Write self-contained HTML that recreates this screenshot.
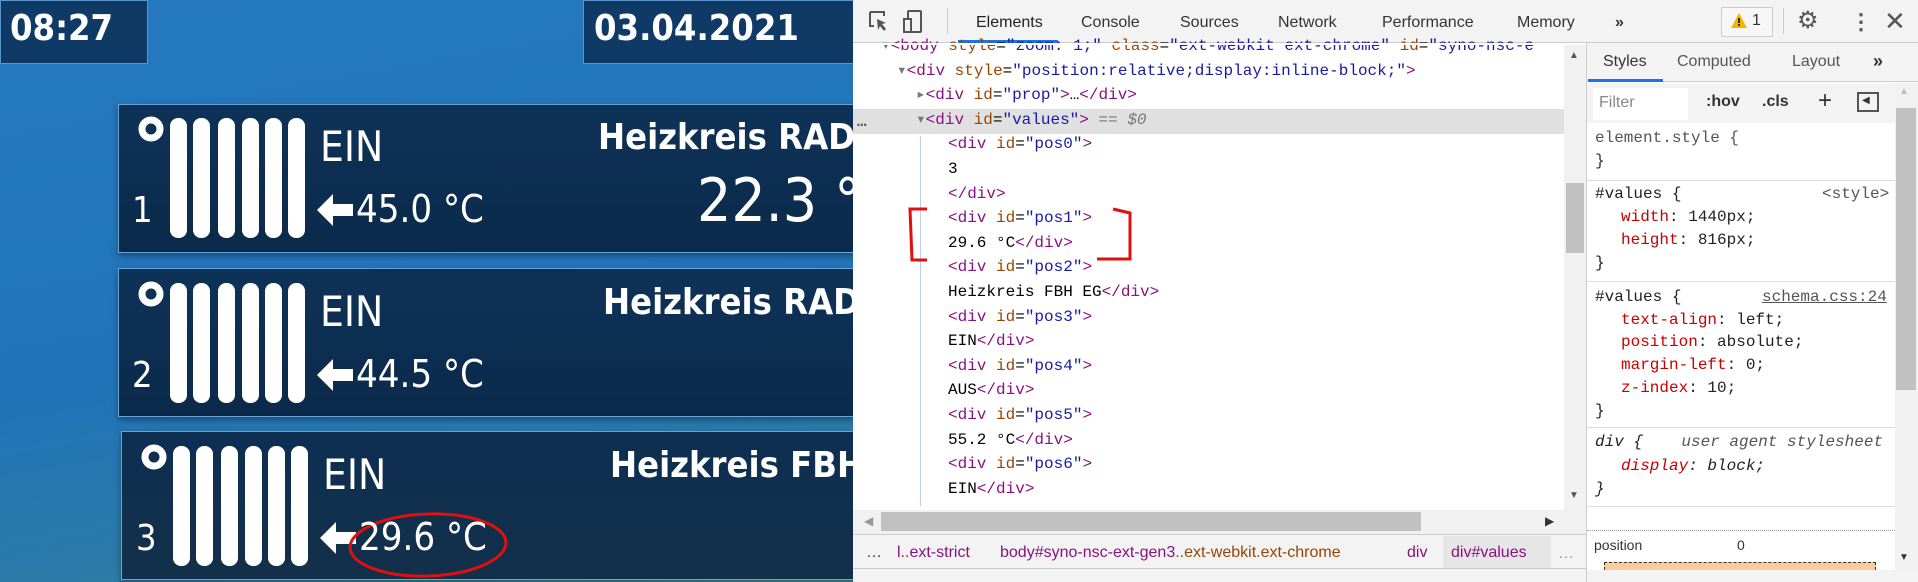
<!DOCTYPE html>
<html><head><meta charset="utf-8"><style>
*{margin:0;padding:0;box-sizing:border-box}
body{width:1918px;height:582px;overflow:hidden;position:relative;background:#fff;font-family:"Liberation Sans",sans-serif}
.a{position:absolute;white-space:nowrap}
.left{position:absolute;left:0;top:0;width:853px;height:582px;overflow:hidden;background:linear-gradient(170deg,#2579bf 0%,#2174b8 55%,#2a7aa8 80%,#3f9090 100%)}
.box{position:absolute;background:#103a66;border:1px solid #5a95cc}
.dv{font-family:"DejaVu Sans Condensed","DejaVu Sans",sans-serif;color:#fff}
.panel{position:absolute;left:118px;width:760px;height:149px;background:linear-gradient(180deg,#0e3257,#0b2a4b);border:1px solid #6aa3d6;box-shadow:0 3px 6px rgba(0,0,0,.35)}
.mono{font-family:"Liberation Mono",monospace;font-size:16px}
.tag{color:#881280}.at{color:#994500}.av{color:#1a1aa6}.g{color:#777}
.tab{position:absolute;top:14px;font-size:16px;color:#333}
</style></head><body>
<div class="left">
  <div class="box" style="left:0;top:0;width:148px;height:64px"></div>
  <div class="a dv" style="left:10px;top:8px;font-size:36px;font-weight:bold">08:27</div>
  <div class="box" style="left:583px;top:0;width:290px;height:64px"></div>
  <div class="a dv" style="left:594px;top:8px;font-size:36px;font-weight:bold">03.04.2021</div>

  <div class="panel" style="top:104px"></div>
  <div class="panel" style="top:268px"></div>
  <div class="panel" style="top:431px;left:121px;background:linear-gradient(180deg,#0e2f52,#13304a)"></div>

  <svg class="a" style="left:0;top:0" width="853" height="582">
    <defs>
      <g id="rad" fill="#fff">
        <circle cx="151" cy="129" r="9" fill="none" stroke="#fff" stroke-width="7"/>
        <rect x="170" y="118" width="17" height="120" rx="8"/>
        <rect x="193" y="118" width="17" height="120" rx="8"/>
        <rect x="218" y="118" width="17" height="120" rx="8"/>
        <rect x="242" y="118" width="17" height="120" rx="8"/>
        <rect x="265" y="118" width="17" height="120" rx="8"/>
        <rect x="288" y="118" width="17" height="120" rx="8"/>
        <path d="M317 210 L333 194 L333 204 L353 204 L353 216 L333 216 L333 226 Z"/>
      </g>
    </defs>
    <use href="#rad"/>
    <use href="#rad" y="165"/>
    <use href="#rad" x="3" y="328"/>
    <ellipse cx="428" cy="545" rx="78" ry="31" fill="none" stroke="#e01010" stroke-width="3" transform="rotate(-2 428 545)"/>
  </svg>

  <div class="a dv" style="left:132px;top:190px;font-size:36px">1</div>
  <div class="a dv" style="left:320px;top:122px;font-size:42px">EIN</div>
  <div class="a dv" style="left:356px;top:187px;font-size:38px">45.0 °C</div>
  <div class="a dv" style="left:598px;top:117px;font-size:36px;font-weight:bold">Heizkreis RAD</div>
  <div class="a dv" style="left:697px;top:166px;font-size:60px">22.3 °C</div>

  <div class="a dv" style="left:132px;top:355px;font-size:36px">2</div>
  <div class="a dv" style="left:320px;top:287px;font-size:42px">EIN</div>
  <div class="a dv" style="left:356px;top:352px;font-size:38px">44.5 °C</div>
  <div class="a dv" style="left:603px;top:282px;font-size:36px;font-weight:bold">Heizkreis RAD</div>

  <div class="a dv" style="left:136px;top:518px;font-size:36px">3</div>
  <div class="a dv" style="left:323px;top:450px;font-size:42px">EIN</div>
  <div class="a dv" style="left:359px;top:515px;font-size:38px">29.6 °C</div>
  <div class="a dv" style="left:610px;top:445px;font-size:36px;font-weight:bold">Heizkreis FBH</div>
</div>

<!-- devtools -->
<div class="a" style="left:853px;top:0;width:1065px;height:43px;background:#f3f3f3;border-bottom:1px solid #ccc"></div>
<svg class="a" style="left:868px;top:10px" width="60" height="24"><path d="M2 2h14v4M2 2v14h4" fill="none" stroke="#555" stroke-width="2"/><path d="M9 9l9 4-4 1 4 5-2 2-4-5-2 4z" fill="#555"/><rect x="40" y="1" width="13" height="21" rx="1" fill="none" stroke="#555" stroke-width="2"/><rect x="36" y="9" width="7" height="13" fill="#f3f3f3" stroke="#555" stroke-width="2"/></svg>
<div class="a" style="left:947px;top:8px;width:1px;height:26px;background:#ccc"></div>
<div class="tab" style="left:976px;color:#222">Elements</div>
<div class="a" style="left:958px;top:40px;width:100px;height:3px;background:#1a73e8"></div>
<div class="tab" style="left:1081px">Console</div>
<div class="tab" style="left:1180px">Sources</div>
<div class="tab" style="left:1278px">Network</div>
<div class="tab" style="left:1382px">Performance</div>
<div class="tab" style="left:1517px">Memory</div>
<div class="tab" style="left:1615px;font-weight:bold">»</div>
<div class="a" style="left:1721px;top:7px;width:52px;height:30px;border:1px solid #ccc;border-radius:2px;background:#f7f7f7"></div>
<svg class="a" style="left:1730px;top:12px" width="18" height="18"><path d="M9 1L17 16H1Z" fill="#f2b600"/><rect x="8" y="6" width="2" height="5" fill="#333"/><rect x="8" y="12" width="2" height="2" fill="#333"/></svg>
<div class="a" style="left:1752px;top:12px;font-size:16px;color:#333">1</div>
<div class="a" style="left:1783px;top:8px;width:1px;height:26px;background:#ccc"></div>
<div class="a" style="left:1797px;top:6px;font-size:24px;color:#555">⚙</div>
<div class="a" style="left:1850px;top:9px;font-size:22px;color:#555;font-weight:bold">⋮</div>
<div class="a" style="left:1884px;top:6px;font-size:26px;color:#555">✕</div>

<!-- elements pane -->
<div class="a" style="left:853px;top:109px;width:711px;height:25px;background:#e0e0e0"></div>
<div class="a" style="left:920px;top:136px;width:1px;height:370px;background:#b8d0e8"></div>
<div class="a mono" style="left:857px;top:113px;color:#555;font-weight:bold">…</div>
<div class="a mono" style="left:0;top:34px;line-height:24.6px">
<div style="padding-left:881px"><span class="g">▾</span><span class="tag">&lt;body</span> <span class="at">style</span>=<span class="av">"zoom: 1;"</span> <span class="at">class</span>=<span class="av">"ext-webkit ext-chrome"</span> <span class="at">id</span>=<span class="av">"syno-nsc-e</span></div>
<div style="padding-left:897px"><span class="g">▾</span><span class="tag">&lt;div</span> <span class="at">style</span>=<span class="av">"position:relative;display:inline-block;"</span><span class="tag">&gt;</span></div>
<div style="padding-left:916px"><span class="g">▸</span><span class="tag">&lt;div</span> <span class="at">id</span>=<span class="av">"prop"</span><span class="tag">&gt;</span>…<span class="tag">&lt;/div&gt;</span></div>
<div style="padding-left:916px"><span class="g">▾</span><span class="tag">&lt;div</span> <span class="at">id</span>=<span class="av">"values"</span><span class="tag">&gt;</span> <span class="g">== <i>$0</i></span></div>
<div style="padding-left:948px"><span class="tag">&lt;div</span> <span class="at">id</span>=<span class="av">"pos0"</span><span class="tag">&gt;</span></div>
<div style="padding-left:948px">3</div>
<div style="padding-left:948px"><span class="tag">&lt;/div&gt;</span></div>
<div style="padding-left:948px"><span class="tag">&lt;div</span> <span class="at">id</span>=<span class="av">"pos1"</span><span class="tag">&gt;</span></div>
<div style="padding-left:948px">29.6 °C<span class="tag">&lt;/div&gt;</span></div>
<div style="padding-left:948px"><span class="tag">&lt;div</span> <span class="at">id</span>=<span class="av">"pos2"</span><span class="tag">&gt;</span></div>
<div style="padding-left:948px">Heizkreis FBH EG<span class="tag">&lt;/div&gt;</span></div>
<div style="padding-left:948px"><span class="tag">&lt;div</span> <span class="at">id</span>=<span class="av">"pos3"</span><span class="tag">&gt;</span></div>
<div style="padding-left:948px">EIN<span class="tag">&lt;/div&gt;</span></div>
<div style="padding-left:948px"><span class="tag">&lt;div</span> <span class="at">id</span>=<span class="av">"pos4"</span><span class="tag">&gt;</span></div>
<div style="padding-left:948px">AUS<span class="tag">&lt;/div&gt;</span></div>
<div style="padding-left:948px"><span class="tag">&lt;div</span> <span class="at">id</span>=<span class="av">"pos5"</span><span class="tag">&gt;</span></div>
<div style="padding-left:948px">55.2 °C<span class="tag">&lt;/div&gt;</span></div>
<div style="padding-left:948px"><span class="tag">&lt;div</span> <span class="at">id</span>=<span class="av">"pos6"</span><span class="tag">&gt;</span></div>
<div style="padding-left:948px">EIN<span class="tag">&lt;/div&gt;</span></div>
</div>
<div class="a" style="left:853px;top:43px;width:733px;height:2px;background:#fff"></div>
<!-- red bracket -->
<svg class="a" style="left:900px;top:205px" width="260" height="60"><path d="M27 4H10L12 55H27M213 4L230 8V54H197" fill="none" stroke="#e01010" stroke-width="3"/></svg>
<!-- vertical scrollbar -->
<div class="a" style="left:1564px;top:45px;width:22px;height:465px;background:#f1f1f1"></div>
<div class="a" style="left:1566px;top:183px;width:18px;height:70px;background:#c1c1c1"></div>
<div class="a" style="left:1569px;top:50px;font-size:10px;color:#555">▲</div>
<div class="a" style="left:1569px;top:490px;font-size:10px;color:#555">▼</div>
<!-- horizontal scrollbar -->
<div class="a" style="left:853px;top:510px;width:733px;height:24px;background:#f1f1f1"></div>
<div class="a" style="left:881px;top:512px;width:540px;height:19px;background:#c1c1c1"></div>
<div class="a" style="left:864px;top:514px;font-size:12px;color:#999">◀</div>
<div class="a" style="left:1545px;top:514px;font-size:12px;color:#333">▶</div>
<!-- breadcrumb -->
<div class="a" style="left:853px;top:534px;width:733px;height:35px;background:#f3f3f3;border-top:1px solid #ccc;border-bottom:1px solid #ccc"></div>
<div class="a" style="left:866px;top:544px;font-size:16px;color:#333">…</div>
<div class="a" style="left:897px;top:544px;font-size:16px;color:#881280">l..ext-strict</div>
<div class="a" style="left:1000px;top:544px;font-size:16px;color:#881280">body<span>#syno-nsc-ext-gen3</span><span style="color:#994500">..ext-webkit.ext-chrome</span></div>
<div class="a" style="left:1407px;top:544px;font-size:16px;color:#881280">div</div>
<div class="a" style="left:1443px;top:536px;width:108px;height:32px;background:#e6e6e6"></div>
<div class="a" style="left:1451px;top:544px;font-size:16px;color:#881280">div#values</div>
<div class="a" style="left:1558px;top:545px;font-size:16px;color:#999">…</div>
<div class="a" style="left:853px;top:569px;width:733px;height:13px;background:#f3f3f3"></div>

<!-- styles pane -->
<div class="a" style="left:1586px;top:43px;width:1px;height:539px;background:#ccc"></div>
<div class="a" style="left:1587px;top:43px;width:331px;height:39px;background:#f3f3f3;border-bottom:1px solid #ccc"></div>
<div class="a" style="left:1603px;top:53px;font-size:16px;color:#333">Styles</div>
<div class="a" style="left:1588px;top:79px;width:75px;height:3px;background:#1a73e8"></div>
<div class="a" style="left:1677px;top:53px;font-size:16px;color:#555">Computed</div>
<div class="a" style="left:1792px;top:53px;font-size:16px;color:#555">Layout</div>
<div class="a" style="left:1873px;top:51px;font-size:18px;color:#333;font-weight:bold">»</div>
<div class="a" style="left:1587px;top:83px;width:308px;height:40px;background:#f3f3f3"></div>
<div class="a" style="left:1593px;top:88px;width:95px;height:32px;background:#fff"></div>
<div class="a" style="left:1599px;top:94px;font-size:16px;color:#888">Filter</div>
<div class="a" style="left:1706px;top:93px;font-size:16px;color:#333;font-weight:bold">:hov</div>
<div class="a" style="left:1762px;top:93px;font-size:16px;color:#333;font-weight:bold">.cls</div>
<div class="a" style="left:1818px;top:87px;font-size:24px;color:#333">+</div>
<div class="a" style="left:1857px;top:92px;width:22px;height:20px;border:2px solid #555"></div>
<div class="a" style="left:1862px;top:95px;font-size:10px;color:#333">◀</div>
<div class="a mono" style="left:1595px;top:127px;line-height:23px;color:#333">
<div style="color:#555">element.style {</div><div>}</div>
</div>
<div class="a" style="left:1587px;top:180px;width:308px;height:1px;background:#ddd"></div>
<div class="a mono" style="left:1595px;top:183px;line-height:23px;color:#222">
<div>#values {</div>
<div style="padding-left:26px"><span style="color:#c80000">width</span>: 1440px;</div>
<div style="padding-left:26px"><span style="color:#c80000">height</span>: 816px;</div>
<div>}</div>
</div>
<div class="a mono" style="left:1822px;top:183px;line-height:23px;color:#555">&lt;style&gt;</div>
<div class="a" style="left:1587px;top:281px;width:308px;height:1px;background:#ddd"></div>
<div class="a mono" style="left:1595px;top:286px;line-height:22.7px;color:#222">
<div>#values {</div>
<div style="padding-left:26px"><span style="color:#c80000">text-align</span>: left;</div>
<div style="padding-left:26px"><span style="color:#c80000">position</span>: absolute;</div>
<div style="padding-left:26px"><span style="color:#c80000">margin-left</span>: 0;</div>
<div style="padding-left:26px"><span style="color:#c80000">z-index</span>: 10;</div>
<div>}</div>
</div>
<div class="a mono" style="left:1762px;top:286px;line-height:23px;color:#555;text-decoration:underline">schema.css:24</div>
<div class="a" style="left:1587px;top:427px;width:308px;height:1px;background:#ddd"></div>
<div class="a mono" style="left:1595px;top:431px;line-height:23.5px;color:#222;font-style:italic">
<div>div {&nbsp;&nbsp;&nbsp;&nbsp;<span style="color:#555">user agent stylesheet</span></div>
<div style="padding-left:26px"><span style="color:#c80000">display</span>: block;</div>
<div>}</div>
</div>
<div class="a" style="left:1587px;top:506px;width:308px;height:1px;background:#ddd"></div>
<div class="a" style="left:1587px;top:530px;width:308px;height:0;border-top:1px dotted #999"></div>
<div class="a" style="left:1594px;top:537px;font-size:14px;color:#333">position</div>
<div class="a" style="left:1737px;top:537px;font-size:14px;color:#333">0</div>
<div class="a" style="left:1604px;top:562px;width:272px;height:8px;background:#f9cc9d;border:1px dashed #333;border-bottom:none"></div>
<div class="a" style="left:1587px;top:570px;width:331px;height:12px;background:#f3f3f3"></div>
<div class="a" style="left:1895px;top:83px;width:23px;height:487px;background:#f1f1f1"></div>
<div class="a" style="left:1896px;top:108px;width:20px;height:282px;background:#c1c1c1"></div>
<div class="a" style="left:1899px;top:86px;font-size:10px;color:#bbb">▲</div>
<div class="a" style="left:1899px;top:552px;font-size:10px;color:#333">▼</div>
</body></html>
